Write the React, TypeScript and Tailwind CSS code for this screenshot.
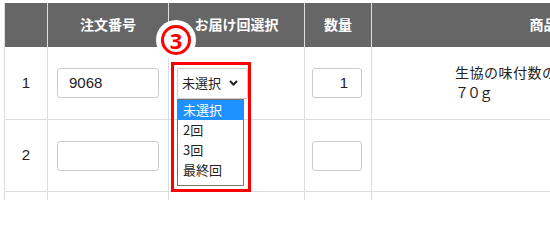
import React from 'react';

const headCell = 'h-[44px] bg-[#666666] text-white font-bold text-[14px] flex items-center justify-center border-l border-[#dddddd]';
const bodyCell = 'border-l border-b border-[#dddddd] flex items-center';

const App: React.FC = () => {
  const options = ['未選択', '2回', '3回', '最終回'];

  return (
    <div className="relative w-[550px] h-[200px] overflow-hidden bg-white pt-[3px] pl-[4px] text-[#222222] font-['Liberation_Sans','Noto_Sans_CJK_JP',sans-serif]">
      <div className="grid grid-cols-[43px_121px_136px_67px_358px] w-max">
        {/* Header */}
        <div className={`${headCell} border-[#666666]`} />
        <div className={headCell}>注文番号</div>
        <div className={headCell}>お届け回選択</div>
        <div className={headCell}>数量</div>
        <div className={headCell}>商品名</div>

        {/* Row 1 */}
        <div className={`${bodyCell} h-[73px] justify-center text-[15px]`}>1</div>
        <div className={`${bodyCell} h-[73px] pl-[9px]`}>
          <div className="w-[102px] h-[30px] border border-[#cccccc] rounded-[3px] flex items-center pl-[11px] text-[15px]">9068</div>
        </div>
        <div className={`${bodyCell} h-[73px] pl-[8px]`}>
          <div className="w-[71px] h-[31px] border border-[#cccccc] rounded-[2px] bg-white flex items-center justify-between pl-[4px] pr-[9px] text-[13px] font-['Noto_Sans_CJK_JP',sans-serif]">
            <span>未選択</span>
            <svg width="9" height="6" viewBox="0 0 9 6">
              <path d="M1 1l3.5 3.5L8 1" fill="none" stroke="#222" strokeWidth="2" />
            </svg>
          </div>
        </div>
        <div className={`${bodyCell} h-[73px] pl-[7px]`}>
          <div className="w-[50px] h-[30px] border border-[#cccccc] rounded-[3px] flex items-center justify-end pr-[13px] text-[15px]">1</div>
        </div>
        <div className={`${bodyCell} h-[73px] pl-[83px] font-['Noto_Sans_CJK_JP',sans-serif] text-[14px] leading-[20px]`}>
          <div className="-mt-[2px]">
            <div className="tracking-[0.5px] whitespace-nowrap">生協の味付数の子（塩分控えめ）</div>
            <div className="tracking-[-2px]">７０ｇ</div>
          </div>
        </div>

        {/* Row 2 */}
        <div className={`${bodyCell} h-[72px] justify-center text-[15px]`}>2</div>
        <div className={`${bodyCell} h-[72px] pl-[9px]`}>
          <div className="w-[102px] h-[30px] border border-[#cccccc] rounded-[3px]" />
        </div>
        <div className={`${bodyCell} h-[72px]`} />
        <div className={`${bodyCell} h-[72px] pl-[7px]`}>
          <div className="w-[50px] h-[30px] border border-[#cccccc] rounded-[3px]" />
        </div>
        <div className={`${bodyCell} h-[72px]`} />

        {/* Row 3 (cut off) */}
        <div className={`${bodyCell} h-[40px]`} />
        <div className={`${bodyCell} h-[40px]`} />
        <div className={`${bodyCell} h-[40px]`} />
        <div className={`${bodyCell} h-[40px]`} />
        <div className={`${bodyCell} h-[40px]`} />
      </div>

      {/* Open dropdown list */}
      <div className="absolute left-[177px] top-[99px] w-[67px] h-[87px] border border-[#767676] bg-white text-[13px] font-['Noto_Sans_CJK_JP',sans-serif]">
        {options.map((o, i) => (
          <div
            key={o}
            className={`h-[20px] leading-[20px] pl-[5px] ${i === 0 ? 'bg-[#1e90ff] text-white' : 'text-[#222222]'}`}
          >
            {o}
          </div>
        ))}
      </div>

      {/* Red highlight box */}
      <div className="absolute left-[171px] top-[62px] w-[80px] h-[130px] border-[3px] border-[#ff0000]" />

      {/* Step marker */}
      <div className="absolute left-[156px] top-[20px] w-[40px] h-[40px] rounded-full bg-white flex items-center justify-center">
        <div className="w-[30px] h-[30px] rounded-full border-[3px] border-[#ff0000] flex items-center justify-center text-[#ff0000] font-bold text-[22px] leading-none font-['Noto_Sans',sans-serif]">
          3
        </div>
      </div>
    </div>
  );
};

export default App;
